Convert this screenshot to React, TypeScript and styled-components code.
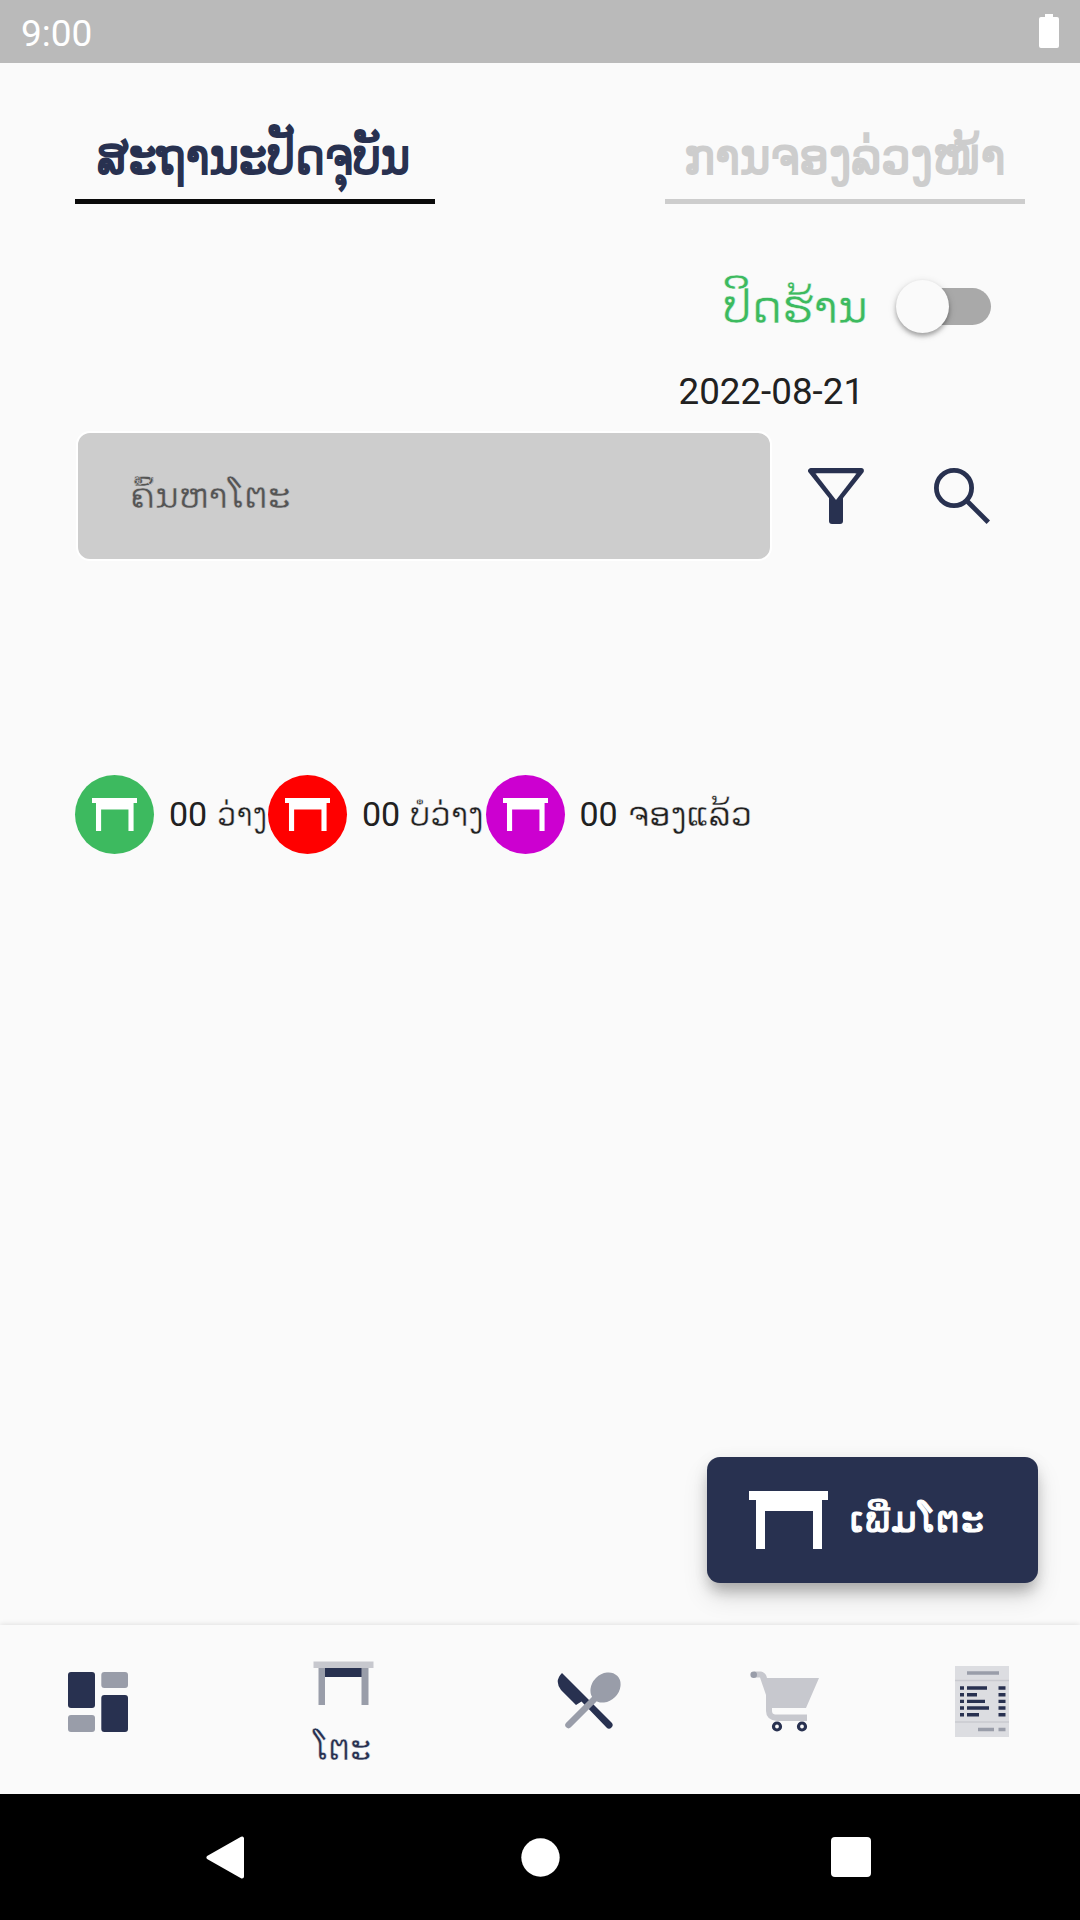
import React from "react";
import styled, { createGlobalStyle } from "styled-components";

const navy = "#283150";
const grey = "#cdcdcd";
const slate = "#999da9";
const mist = "#c7c8ce";
const paper = "#fafafa";

const GlobalStyle = createGlobalStyle`
  * { box-sizing: border-box; }
  body { margin: 0; background: ${paper}; font-family: Roboto, "DejaVu Sans", sans-serif; }
  svg { display: block; flex: none; }
`;

const Screen = styled.div`
  width: 1080px;
  height: 1920px;
  display: flex;
  flex-direction: column;
  overflow: hidden;
  background: ${paper};
  color: #212121;
`;

const StatusBar = styled.header`
  height: 63px;
  flex: none;
  display: flex;
  align-items: center;
  justify-content: space-between;
  padding: 3px 21px 0 21px;
  background: #bababa;
  color: #fff;
  font-size: 37px;
`;

const Battery = styled.svg`
  margin-bottom: 4px;
`;

const Content = styled.main`
  flex: 1;
  display: flex;
  flex-direction: column;
  min-height: 0;
`;

const Tabs = styled.nav`
  display: flex;
  justify-content: space-between;
  padding: 55px 55px 0 75px;
`;

const Tab = styled.div<{ $active?: boolean }>`
  width: 360px;
  height: 86px;
  display: flex;
  align-items: center;
  padding: 0 0 2px ${(p) => (p.$active ? 22 : 19)}px;
  border-bottom: 5.5px solid ${(p) => (p.$active ? "#0a0a0a" : grey)};
  color: ${(p) => (p.$active ? navy : grey)};
`;

const Lao = styled.span<{
  $size: number;
  $track?: number;
  $heavy?: number;
  $thin?: string;
  $stretch?: number;
}>`
  display: block;
  font-family: "DejaVu Sans", sans-serif;
  font-size: ${(p) => p.$size}px;
  letter-spacing: ${(p) => p.$track ?? 0}px;
  line-height: 1;
  white-space: pre;
  transform: scaleX(${(p) => p.$stretch ?? 1});
  transform-origin: left center;
  -webkit-text-stroke: ${(p) =>
    p.$heavy ? `${p.$heavy}px currentColor` : p.$thin ? `0.5px ${p.$thin}` : "0"};
`;

const ShopRow = styled.div`
  display: flex;
  align-items: center;
  justify-content: space-between;
  height: 70px;
  margin-top: 67px;
  padding: 0 89px 0 723px;
  color: #3dba5f;
`;

const SwitchBox = styled.div`
  width: 95px;
  height: 53px;
  display: flex;
  align-items: center;
`;

const Track = styled.div`
  width: 87px;
  height: 37px;
  margin-left: 8px;
  border-radius: 19px;
  background: #a9a9a9;
  display: flex;
  align-items: center;
`;

const Thumb = styled.div`
  flex: none;
  width: 53px;
  height: 53px;
  margin-left: -8px;
  border-radius: 50%;
  background: ${paper};
  box-shadow: 0 3px 4px rgba(0, 0, 0, 0.28), 0 2px 9px rgba(0, 0, 0, 0.14);
`;

const DateText = styled.div`
  align-self: flex-end;
  width: 401.5px;
  height: 42px;
  margin-top: 30px;
  line-height: 42px;
  font-size: 36.75px;
`;

const SearchRow = styled.div`
  display: flex;
  align-items: center;
  margin-top: 18px;
  padding-left: 76px;
`;

const SearchField = styled.div`
  width: 696px;
  height: 130px;
  display: flex;
  align-items: center;
  padding-left: 52px;
  border: 2px solid #fff;
  border-radius: 14px;
  background: ${grey};
  color: #555;
  margin-right: 36px;
`;

const SearchIcon = styled.svg`
  margin-left: 70px;
`;

const Legend = styled.div`
  display: flex;
  margin: 213.5px 0 0 75px;
`;

const LegendItem = styled.div<{ $width: number }>`
  width: ${(p) => p.$width}px;
  display: flex;
  align-items: center;
  white-space: pre;
`;

const Disc = styled.div<{ $color: string }>`
  width: 79px;
  height: 79px;
  margin-right: 15px;
  flex: none;
  display: flex;
  align-items: center;
  justify-content: center;
  border-radius: 50%;
  background: ${(p) => p.$color};
`;

const Count = styled.span`
  font-size: 34px;
  margin-right: 10px;
`;

const AddButton = styled.button`
  width: 331px;
  height: 126px;
  margin: auto 42px 42px auto;
  flex: none;
  display: flex;
  align-items: center;
  gap: 22px;
  padding: 0 0 0 42px;
  border: 0;
  border-radius: 13px;
  background: ${navy};
  color: #fff;
  box-shadow: 0 11px 14px -3px rgba(0, 0, 0, 0.22), 0 14px 26px rgba(0, 0, 0, 0.12), 0 2px 18px rgba(0, 0, 0, 0.05);
`;

const BottomNav = styled.nav`
  height: 169px;
  flex: none;
  display: flex;
  align-items: flex-start;
  background: ${paper};
  box-shadow: 0 -1px 5px rgba(0, 0, 0, 0.1);
`;

const NavItem = styled.div<{ $left: number; $top: number }>`
  width: 70px;
  margin-left: ${(p) => p.$left}px;
  padding-top: ${(p) => p.$top}px;
  display: flex;
  flex-direction: column;
  gap: 25px;
  color: ${navy};
`;

const SystemBar = styled.footer`
  height: 126px;
  flex: none;
  display: flex;
  align-items: center;
  justify-content: space-between;
  padding: 0 209px 0 206px;
  background: #000;
`;

const HomeButton = styled.svg`
  margin-left: 5px;
`;

const TableIcon = ({ width, height }: { width: number; height: number }) => (
  <svg width={width} height={height} viewBox="0 0 79 58" preserveAspectRatio="none" fill="#fff">
    <path d="M0 0h79v9h-6v49h-9V20H16v38H7V9H0z" />
  </svg>
);

export default function App() {
  return (
    <Screen>
      <GlobalStyle />
      <StatusBar>
        <span>9:00</span>
        <Battery width="20" height="34" viewBox="0 0 20 34" fill="#fff">
          <path d="M6 0h8v3h4q2 0 2 2v27q0 2-2 2H2q-2 0-2-2V5q0-2 2-2h4z" />
        </Battery>
      </StatusBar>
      <Content>
        <Tabs>
          <Tab $active>
            <Lao $size={49} $heavy={1.9} $stretch={0.911}>ສະຖານະປັດຈຸບັນ</Lao>
          </Tab>
          <Tab>
            <Lao $size={49} $heavy={1.9} $stretch={0.945}>ການຈອງລ່ວງໜ້າ</Lao>
          </Tab>
        </Tabs>
        <ShopRow>
          <Lao $size={47} $stretch={0.97} $thin={paper}>ປິດຮ້ານ</Lao>
          <SwitchBox>
            <Track>
              <Thumb />
            </Track>
          </SwitchBox>
        </ShopRow>
        <DateText>2022-08-21</DateText>
        <SearchRow>
          <SearchField>
            <Lao $size={36} $stretch={1.005} $thin={grey}>ຄົ້ນຫາໂຕະ</Lao>
          </SearchField>
          <svg width="56" height="56" viewBox="0 0 56 56" fill="none" stroke={navy}>
            <path d="M2.8 2.8H53.2L32 29.5H24Z" strokeWidth="5.4" strokeLinejoin="round" fill={paper} />
            <path d="M21 30h14v23q0 3-3 3h-8q-3 0-3-3z" fill={navy} stroke="none" />
            <path d="M7.5 5.4h41L28 32z" fill={paper} stroke="none" />
          </svg>
          <SearchIcon width="56" height="56" viewBox="0 0 56 56" fill="none" stroke={navy} strokeWidth="4.8">
            <circle cx="20" cy="20" r="17.6" />
            <path d="M32.5 32.5L54.3 54.3" />
          </SearchIcon>
        </SearchRow>
        <Legend>
          <LegendItem $width={193}>
            <Disc $color="#3dba5f"><TableIcon width={45} height={33} /></Disc>
            <Count>00</Count>
            <Lao $size={33} $stretch={0.92} $thin={paper}>ວ່າງ</Lao>
          </LegendItem>
          <LegendItem $width={217.5}>
            <Disc $color="#ff0000"><TableIcon width={45} height={33} /></Disc>
            <Count>00</Count>
            <Lao $size={33} $stretch={0.98} $thin={paper}>ບໍ່ວ່າງ</Lao>
          </LegendItem>
          <LegendItem $width={280}>
            <Disc $color="#cc00d0"><TableIcon width={45} height={33} /></Disc>
            <Count>00</Count>
            <Lao $size={34} $stretch={0.99} $thin={paper}>ຈອງແລ້ວ</Lao>
          </LegendItem>
        </Legend>
        <AddButton>
          <TableIcon width={79} height={58} />
          <Lao $size={35} $heavy={1.2} $track={1.5} $stretch={1.03}>ເພີ່ມໂຕະ</Lao>
        </AddButton>
      </Content>
      <BottomNav>
        <NavItem $left={68} $top={47}>
          <svg width="60" height="60" viewBox="0 0 60 60">
            <rect width="27" height="36" rx="3" fill={navy} />
            <rect x="33.3" width="26.7" height="16" rx="3" fill={slate} />
            <rect x="33.3" y="23" width="26.7" height="37" rx="3" fill={navy} />
            <rect y="43" width="27" height="17" rx="3" fill={slate} />
          </svg>
        </NavItem>
        <NavItem $left={175} $top={36}>
          <svg width="61" height="44" viewBox="0 0 61 44">
            <path d="M12 7h37v9H12z" fill={navy} />
            <path d="M5.5 7H12v37H5.5zM48.500 7H55.500v37H48.500z" fill={slate} />
            <path d="M.5.500h60V7H.5z" fill={mist} />
          </svg>
          <Lao $size={36} $stretch={0.93} $thin={paper}>ໂຕະ</Lao>
        </NavItem>
        <NavItem $left={174} $top={47}>
          <svg width="64" height="57" viewBox="0 0 64 57">
            <path d="M5 1L54.500 50.500a3.500 3.500 0 0 1-5 5L24.500 29.500 19 33 4 18Q-3 9 5 1z" fill={navy} />
            <path d="M11.500 53L37 27.500" stroke={slate} strokeWidth="6.500" strokeLinecap="round" />
            <ellipse cx="48.500" cy="15.500" rx="16.500" ry="13.500" transform="rotate(-45 48.500 15.500)" fill={slate} />
          </svg>
        </NavItem>
        <NavItem $left={123} $top={46}>
          <svg width="70" height="61" viewBox="0 0 70 61">
            <path d="M4 .5h7q5 1 6 6.500h52L56 37H22v3q0 3 3 3.500h32V50H27Q16 49 16 40V24L10 6.500H4z" fill={mist} />
            <circle cx="3.700" cy="3.700" r="3.300" fill={slate} />
            <circle cx="27" cy="55.500" r="3.500" fill={paper} stroke={navy} strokeWidth="3.200" />
            <circle cx="52" cy="55.500" r="3.500" fill={paper} stroke={navy} strokeWidth="3.200" />
          </svg>
        </NavItem>
        <NavItem $left={135} $top={41}>
          <svg width="54" height="71" viewBox="0 0 54 71">
            <path d="M0 0h54v71H0z" fill="#dcdde1" />
            <path d="M0 14.500h54M0 56h54" stroke="#c9cad0" strokeWidth="1.500" />
            <path d="M12 7h32M23 63.500h16M43.500 63.500h7" stroke={slate} strokeWidth="3.600" />
            <path d="M5 22h4M12 22h20M43.500 22h7M5 28.700h4M12 28.700h10M43.500 28.700h7M5 35.400h4M12 35.400h18M43.500 35.400h7M5 42h4M12 42h22M43.500 42h7M5 48.700h4M12 48.700h12M43.500 48.700h7" stroke={navy} strokeWidth="3.400" />
          </svg>
        </NavItem>
      </BottomNav>
      <SystemBar>
        <svg width="38" height="43" viewBox="0 0 38 43" fill="#fff" stroke="#fff" strokeWidth="4" strokeLinejoin="round">
          <path d="M36 2.500v38L2.500 21.500z" />
        </svg>
        <HomeButton width="39" height="39" viewBox="0 0 39 39"><circle cx="19.500" cy="19.500" r="19.200" fill="#fff" /></HomeButton>
        <svg width="40" height="40" viewBox="0 0 40 40"><rect width="40" height="40" rx="4" fill="#fff" /></svg>
      </SystemBar>
    </Screen>
  );
}
